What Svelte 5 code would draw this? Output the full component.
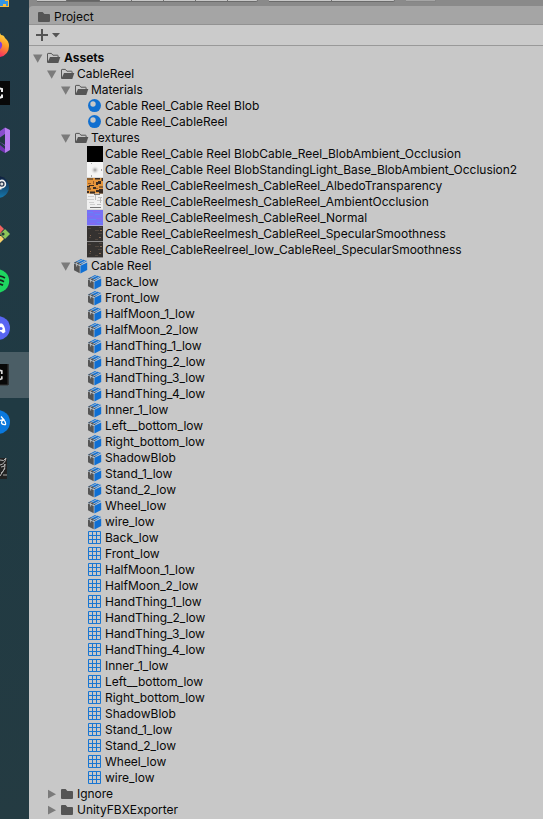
<script>
  const parts = ['Back_low', 'Front_low', 'HalfMoon_1_low', 'HalfMoon_2_low', 'HandThing_1_low', 'HandThing_2_low', 'HandThing_3_low', 'HandThing_4_low', 'Inner_1_low', 'Left__bottom_low', 'Right_bottom_low', 'ShadowBlob', 'Stand_1_low', 'Stand_2_low', 'Wheel_low', 'wire_low'];

  const rows = [
    { level: 0, icon: 'open', name: 'Assets', arrow: 'down', bold: true },
    { level: 1, icon: 'open', name: 'CableReel', arrow: 'down' },
    { level: 2, icon: 'open', name: 'Materials', arrow: 'down' },
    { level: 3, icon: 'material', name: 'Cable Reel_Cable Reel Blob' },
    { level: 3, icon: 'material', name: 'Cable Reel_CableReel' },
    { level: 2, icon: 'open', name: 'Textures', arrow: 'down' },
    { level: 3, icon: 'black', name: 'Cable Reel_Cable Reel BlobCable_Reel_BlobAmbient_Occlusion' },
    { level: 3, icon: 'blob', name: 'Cable Reel_Cable Reel BlobStandingLight_Base_BlobAmbient_Occlusion2' },
    { level: 3, icon: 'albedo', name: 'Cable Reel_CableReelmesh_CableReel_AlbedoTransparency' },
    { level: 3, icon: 'occlusion', name: 'Cable Reel_CableReelmesh_CableReel_AmbientOcclusion' },
    { level: 3, icon: 'normal', name: 'Cable Reel_CableReelmesh_CableReel_Normal' },
    { level: 3, icon: 'specular', name: 'Cable Reel_CableReelmesh_CableReel_SpecularSmoothness' },
    { level: 3, icon: 'specular', name: 'Cable Reel_CableReelreel_low_CableReel_SpecularSmoothness' },
    { level: 2, icon: 'prefab', name: 'Cable Reel', arrow: 'down' },
    ...parts.map((name) => ({ level: 3, icon: 'prefab', name })),
    ...parts.map((name) => ({ level: 3, icon: 'mesh', name })),
    { level: 1, icon: 'folder', name: 'Ignore', arrow: 'right' },
    { level: 1, icon: 'folder', name: 'UnityFBXExporter', arrow: 'right' }
  ];

  const apps = ['explorer', 'firefox', 'unityhub', 'vs', 'steam', 'fork', 'spotify', 'discord', 'unity', 'scanner', 'sculpt'];
</script>

{#snippet folder()}
  <path d="M2 4q0-1 1-1h3.6l1.8 2H13q1 0 1 1v6q0 1-1 1H3q-1 0-1-1z" fill="#555" />
{/snippet}

{#snippet assetIcon(kind)}
  <svg class="icon" viewBox="0 0 16 16">
    {#if kind === 'open'}
      <path d="M2.5 12.5V4q0-.6.6-.6h3.3l1.5 1.8h4.6q.6 0 .6.6v1.4" fill="none" stroke="#555" />
      <path d="M5 7h10.3l-2 6H2.3z" fill="#555" />
    {:else if kind === 'folder'}
      {@render folder()}
    {:else if kind === 'material'}
      <circle cx="7.5" cy="7.6" r="6.5" fill="#106fd0" />
      <circle cx="6" cy="6" r="2.7" fill="#c8c8c8" />
    {:else if kind === 'prefab'}
      <path d="M1 5.6 6.7 8v7.2L1 12.2z" fill="#555" />
      <path d="M7.4 7.8 14.2 4.400V12l-6.800 3.400z" fill="#0f6fd3" />
      <path d="M1 4.800 8 .9l6.200 2.200L7.200 7z" fill="#0f6fd3" />
      <path d="M1 4.800 3.300 3.500 9 5.900 7.200 7z" fill="#555" />
      <path d="M3.600 8.500V4.700L10 1.500M6 6.300 12.600 2.800" fill="none" stroke="#c8c8c8" stroke-width=".8" />
    {:else if kind === 'mesh'}
      <path d="M1.5 1.5h12v12h-12zM5.5 1v13M9.5 1v13M1 5.5h13M1 9.5h13" fill="none" stroke="#1976d2" />
    {:else if kind === 'black'}
      <path d="M0 0h16v16H0z" />
    {:else if kind === 'blob'}
      <defs>
        <radialGradient id="soft"><stop offset="0" stop-color="#999" /><stop offset=".4" stop-color="#d2d2d2" /><stop offset="1" stop-color="#f5f5f5" stop-opacity="0" /></radialGradient>
      </defs>
      <path d="M0 0h16v15.4H0z" fill="#f5f5f5" />
      <circle cx="8" cy="8" r="4.6" fill="url(#soft)" />
      <path d="M4 1h1v1H4zM4 13h1v2H4zM14 7h1v2h-1z" fill="#aaa" />
    {:else if kind === 'albedo'}
      <path d="M0 0h16v15.4H0z" fill="#e5963c" />
      <path d="M0 .5h6v1H0zM8 0h5v1.5H8zM9 4h2v3H9zM11 3h3v3h-3zM0 8h3v1.5H0zM2 7h5v1H2zM0 10.5h4v1H0zM12 8.5h4v1h-4zM0 13h2v2H0zM3 13.5h5v1.9H3zM9 12h3v2H9zM12 11h4v4.4h-4zM14.5 0H16v3h-1.5zM6 9h3v2H6z" fill="#392c24" />
      <path d="M6 3h1v3H6zM9 10h2v1H9zM1 5h3v1H1z" fill="#995d2b" />
    {:else if kind === 'occlusion'}
      <path d="M0 0h16v15.4H0z" fill="#f0f0f0" />
      <path d="M1 2.5h6M0 5.5h7M2 8.5h5M10 6.5h5M3 10.5h5" stroke="#cfcfcf" />
      <path d="M8.5 1v5M11 3.5h4M13.5 4v5M10 10.5h4" stroke="#bdbdbd" />
      <path d="M3 13.5h11M7 .5h6" stroke="#777" />
    {:else if kind === 'normal'}
      <path d="M0 0h16v15.4H0z" fill="#7770f5" />
      <path d="M1 2.5h5M8 4.5h5M2 9.5h7M10 12.5h5" stroke="#6485f5" />
      <path d="M6 1.5h7M0 6.5h6M9 8.5h6M3 13.5h5" stroke="#8a69ec" />
    {:else}
      <path d="M0 0h16v15.4H0z" fill="#353230" />
      <path d="M1 2.5h3M8 4.5h4M11 7.5h4M2 11.5h2M8 13.5h3M12 1.5h3" stroke="#51473f" />
      <path d="M13 4h2v1h-2zM3 9h1v1H3zM12 11h2v1h-2z" fill="#8a6c55" />
    {/if}
  </svg>
{/snippet}

<div class="screen">
  <aside>
    {#each apps as app}
      <div class="app" class:active={app === 'unity'}>
        <svg viewBox="0 0 29 46">
          {#if app === 'explorer'}
            <path d="M0 22h9v9H0z" fill="#f7bd3f" />
            <path d="M0 22h5v3h3v5H6v-2H3v2H0z" fill="#3394e2" />
          {:else if app === 'firefox'}
            <defs>
              <linearGradient id="flame" x1=".8" y1="0" x2=".5" y2="1"><stop offset="0" stop-color="#ffe14a" /><stop offset=".5" stop-color="#ff9b25" /><stop offset="1" stop-color="#f52f62" /></linearGradient>
            </defs>
            <path d="M-3 13 0 10l1 2q3 0 4 3 4 3 4 8 0 9-9 11h-5z" fill="url(#flame)" />
            <path d="M-3 18q6 0 5 5-1 4-5 4z" fill="#813be0" />
          {:else if app === 'unityhub'}
            <path d="M-2 11h12v24H-2z" fill="#080808" />
            <path d="M-1 18.2 2 19v3M2 24.500v2.500L-1 28" fill="none" stroke="#eee" stroke-width="2" />
          {:else if app === 'vs'}
            <path d="M0 14 5 10.5V29L0 25z" fill="#8a4dce" />
            <path d="M5 10.5 10 13v20l-5 3z" fill="#b77bf0" />
            <path d="M0 28 5 32v4L0 33z" fill="#7135b1" />
            <path d="M0 20.5 5 17v11l-5-3z" fill="#213740" />
          {:else if app === 'steam'}
            <defs>
              <linearGradient id="night" x1="0" y1="0" x2="0" y2="1"><stop offset="0" stop-color="#101d3b" /><stop offset="1" stop-color="#1678ad" /></linearGradient>
            </defs>
            <circle cx="-2" cy="23" r="11" fill="url(#night)" />
            <circle cx="1.8" cy="20" r="3.6" fill="#26344d" stroke="#f3f3f3" stroke-width="1.6" />
            <circle cx="1.8" cy="20" r="1.5" fill="#ddd" />
            <path d="M-1 24.5h2.5" stroke="#eee" stroke-width="2" />
          {:else if app === 'fork'}
            <path d="m-3 11 7 7-4 5h-3z" fill="#ef6260" />
            <path d="m5 18 5 5-5 5-5-5z" fill="#8cc75a" />
            <path d="M-2 25h4l2 3-6 6z" fill="#f7d26a" />
            <circle cx="3" cy="23" r="1.6" fill="#253b38" />
            <path d="m1 21.5 3-3M1 24.5l3 3" stroke="#253b38" stroke-width=".8" />
          {:else if app === 'spotify'}
            <circle cx="-2.5" cy="23" r="11.7" fill="#1ed760" />
            <path d="M-2 18q4 0 7 2M-2 22q3 0 6 1.7M-2 26q3 0 5 1.3" fill="none" stroke="#17231c" stroke-width="1.7" />
          {:else if app === 'discord'}
            <circle cx="-2" cy="23" r="12" fill="#5865f2" />
            <path d="M-2 18.5h4q3 2 3.4 8.5L3 28.5l-2-2h-3z" fill="#fff" />
            <circle cx="1" cy="23.5" r="1.6" fill="#5865f2" />
          {:else if app === 'unity'}
            <path d="M-2 12H8.5v21H-2z" fill="#080808" />
            <path d="M8 12v21H0" fill="none" stroke="#333" />
            <path d="M-1 18.2 1.800 19v3M1.800 24.300v2.400L-1 27.800" fill="none" stroke="#ddd" stroke-width="1.7" />
          {:else if app === 'scanner'}
            <circle cx="-2" cy="23" r="12" fill="#0a78dc" />
            <path d="M1 17.500 4.500 21.500M-1 22q2-1.500 4.500-1 2.500 1.500 2 4.500-3.500.500-4-1.500 0-2 1.500-3" fill="none" stroke="#fff" stroke-width="1.3" />
          {:else}
            <path d="M0 12h7v21H0z" fill="#222" />
            <path d="M0 14q4 2 6-2-1 6-6 7M1 21q4 0 4-3 0 7-4 9M0 30l5-8" fill="none" stroke="#b5b5b5" />
            <path d="M3 28h4v2H3z" fill="#666" />
          {/if}
        </svg>
      </div>
    {/each}
  </aside>

  <main>
    <div class="toolbar">
      <i style:width="30px"></i><i class="pressed" style:width="33px"></i><i style:width="32px"></i><i style:width="32px"></i><i style:width="32px"></i><i style:width="32px"></i><i class="last" style:width="30px"></i>
      <b></b>
      <i style:width="63px"></i><i class="last" style:width="63px"></i>
      <b></b>
      <i class="dim" style:width="30px"></i>
    </div>
    <header>
      <svg class="icon" viewBox="0 0 16 16">{@render folder()}</svg>
      <span>Project</span>
    </header>
    <div class="create">
      <svg width="30" height="20" viewBox="0 0 30 20"><path d="M7 4h2v12H7zM2 9h12v2H2zM18 8h8l-4 4.5z" fill="#555" /></svg>
    </div>
    <div class="tree">
      {#each rows as row}
        <div class="row" style:padding-left="{2 + row.level * 14}px">
          <svg class="arrow" viewBox="0 0 14 16">
            {#if row.arrow === 'down'}<path d="M2 4.5h9.4L6.7 12.7z" />{/if}
            {#if row.arrow === 'right'}<path d="M3 3.8v8.6L11 8.2z" />{/if}
          </svg>
          {@render assetIcon(row.icon)}
          <span class="name" class:bold={row.bold}>{row.name}</span>
        </div>
      {/each}
    </div>
  </main>
</div>

<style>
  .screen {
    display: flex;
    width: 543px;
    height: 819px;
    overflow: hidden;
    background: #c8c8c8;
    color: #090909;
    font: 12px/16px Inter, sans-serif;
    letter-spacing: -0.02px;
  }
  svg { display: block; flex: none; }
  aside {
    flex: none;
    width: 29px;
    overflow: hidden;
    background: linear-gradient(#213946, #203a43 50%, #243b42);
  }
  .app { height: 46px; margin-bottom: 1px; }
  .app:first-child { margin-top: -24px; }
  .app svg { width: 29px; height: 46px; }
  .active { background: #4b5e66; }
  main {
    display: flex;
    flex: 1;
    flex-direction: column;
    min-width: 0;
    background: #8a8a8a;
  }
  .toolbar { display: flex; flex: none; height: 6px; padding-left: 8px; }
  .toolbar i {
    box-sizing: border-box;
    flex: none;
    height: 2px;
    border-right: 1px solid #707070;
    border-bottom: 1px solid #6b6b6b;
    background: #c8c8c8;
  }
  .toolbar .pressed { background: #656565; }
  .toolbar .last { border-radius: 0 0 2px 0; }
  .toolbar .dim { background: #a5a5a5; border-color: #858585; }
  .toolbar b { width: 11px; }
  header {
    display: flex;
    flex: none;
    align-items: center;
    gap: 2px;
    box-sizing: border-box;
    height: 19px;
    padding: 4px 0 0 7px;
    border-bottom: 1px solid #929292;
    border-radius: 4px 0 0 0;
    background: #a5a5a5;
  }
  .icon { width: 16px; height: 16px; }
  .create {
    box-sizing: border-box;
    flex: none;
    height: 21px;
    padding-left: 5px;
    border-bottom: 1px solid #999;
    background: #cbcbcb;
  }
  .tree { flex: 1; padding-top: 4px; background: #c8c8c8; }
  .row { display: flex; height: 16px; }
  .arrow { width: 14px; height: 16px; fill: #7b7b7b; }
  .name { padding-left: 2px; white-space: nowrap; }
  .bold { padding-left: 3px; font-weight: 700; }
</style>
